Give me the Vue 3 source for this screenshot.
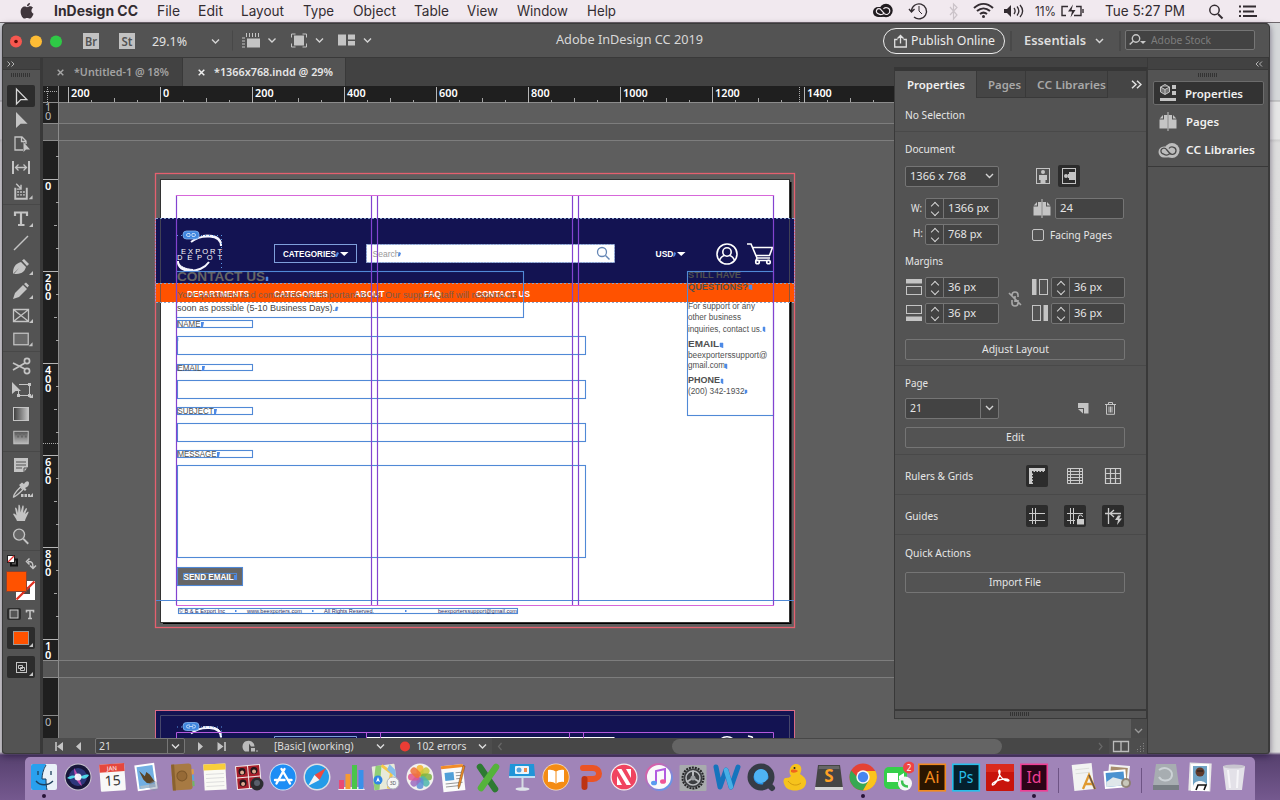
<script setup>
import { h } from 'vue'

const UI = '"Noto Sans", "Open Sans", sans-serif'

/* Single-line label fitted to a fixed advance width */
const Lbl = (p) =>
  h('svg', { width: p.w, height: 16, viewBox: `0 0 ${p.w} 16`, class: 'lbl', style: { display: 'block', overflow: 'visible', flex: 'none' } }, [
    h('text', {
      x: 0, y: 12, textLength: p.w, lengthAdjust: 'spacingAndGlyphs',
      'font-size': p.s || 11.5, 'font-weight': p.b || 400, fill: p.c || '#e6e6e6',
      'font-family': p.f || UI,
    }, p.t),
  ])
Lbl.props = ['t', 'w', 's', 'b', 'c', 'f']

const menus = [
  { t: 'InDesign CC', w: 84, slot: 103, b: 700 },
  { t: 'File', w: 23, slot: 41 }, { t: 'Edit', w: 25, slot: 43 },
  { t: 'Layout', w: 43, slot: 62 }, { t: 'Type', w: 31, slot: 50 },
  { t: 'Object', w: 43, slot: 61 }, { t: 'Table', w: 35, slot: 53 },
  { t: 'View', w: 31, slot: 50 }, { t: 'Window', w: 51, slot: 70 },
  { t: 'Help', w: 29, slot: 29 },
]

const C = '#c4c4c4'
const tri = (x, y) => `<path d="M${x} ${y}v-4l-4 4z" fill="${C}"/>`
/* Tool glyphs: y is the top of each cell, hh its height */
const tools = [
  { y: 84, hh: 25, p: `<rect x="7" y="85" width="28" height="22" rx="2" fill="#2c2c2c"/><path d="M16.500 89v15l4.300-4.400h6z" fill="none" stroke="#d8d8d8" stroke-width="1.300"/>` },
  { y: 109, hh: 23, p: `<path d="M16 112v16l4.600-4.200h7z" fill="${C}"/>` },
  { y: 132, hh: 24, p: `<path d="M23 150h-8v-13h7l4 4v3M21.500 137v4.500h4.500" fill="none" stroke="${C}" stroke-width="1.300"/><path d="M23.500 142v10l2.500-2.500h4z" fill="${C}"/>` },
  { y: 156, hh: 24, p: `<path d="M13 161v13M29 161v13" stroke="${C}" stroke-width="2"/><path d="M16 167.500h10M18.500 164.500l-3 3 3 3M23.500 164.500l3 3-3 3" fill="none" stroke="${C}" stroke-width="1.300"/>` },
  { y: 180, hh: 25, line: 1, p: `<path d="M15 188v11.500h12v-11.500" fill="none" stroke="${C}" stroke-width="2"/><path d="M17 192.500h8M17 195.500h8" stroke="${C}" stroke-width="1.500" stroke-dasharray="2 1"/><path d="M16 184l5 5M21 185v4.500h-4.500" stroke="${C}" stroke-width="1.500" fill="none"/>${tri(33, 200)}` },
  { y: 205, hh: 27, p: `<path d="M15 216v-3.500h12v3.500M21 212.500v12M18 225h6.500" stroke="${C}" stroke-width="2.200" fill="none"/>${tri(33, 227)}` },
  { y: 232, hh: 23, p: `<path d="M14 250l14-14" stroke="${C}" stroke-width="1.500"/>` },
  { y: 255, hh: 24, p: `<path d="M13 274c0-7 2-10 8-12l5 5c-2 6-5 7-12 7l5-6z" fill="${C}"/><path d="M22 260.500l2-1.500 5 5-2 2z" fill="${C}"/>${tri(33, 275)}` },
  { y: 279, hh: 24, p: `<path d="M13 299l2-6 8-8 4 4-8 8z" fill="${C}"/><path d="M24 284l2-1.500 3 3-1.500 2z" fill="${C}"/>${tri(33, 299)}` },
  { y: 303, hh: 24, p: `<path d="M13.500 309.500h15v12h-15zM14 310l14 11M28 310l-14 11" fill="none" stroke="${C}" stroke-width="1.300"/>${tri(33, 323)}` },
  { y: 327, hh: 25, line: 1, p: `<rect x="13.500" y="333.500" width="15" height="12" fill="#696969" stroke="${C}" stroke-width="1.300"/>${tri(33, 347)}` },
  { y: 352, hh: 26, p: `<g fill="none" stroke="${C}" stroke-width="1.700"><circle cx="27" cy="361" r="2.600"/><circle cx="27" cy="371" r="2.600"/><path d="M25 363l-12 7M25 369l-12-6"/></g>` },
  { y: 378, hh: 24, p: `<path d="M19 384.500h10.500v11H18.500v-5" fill="none" stroke="${C}"/><path d="M12 382v12l3.500-3h5.500z" fill="${C}"/><path d="M28 383h3v3h-3zM28 394h3v3h-3zM17 394h3v3h-3z" fill="${C}"/>${tri(33, 398)}` },
  { y: 402, hh: 24, p: `<rect x="13.500" y="407.500" width="15" height="13" fill="url(#tg1)" stroke="${C}"/>` },
  { y: 426, hh: 26, line: 1, p: `<rect x="13.500" y="431.500" width="15" height="13" fill="url(#tg2)" stroke="${C}"/><path d="M15 434h12M17 437h10" stroke="#666" stroke-width="2" stroke-dasharray="2 2"/>` },
  { y: 452, hh: 25, p: `<path d="M14 458h14v9l-4 5H14z" fill="${C}"/><path d="M16 462h10M16 465h10M16 468h6" stroke="#535353"/><path d="M24 472v-4h4" stroke="#535353" fill="none"/>` },
  { y: 477, hh: 24, p: `<path d="M13.500 497c0-3 7-10 7-10l2.500 2.500s-7 7-9.500 7.500z" fill="none" stroke="${C}" stroke-width="1.300"/><path d="M19 485l6 6 1.500-1.500-1.500-1.500c3-1 4-3 4-5s-3-3-5 1l-2-1.500z" fill="${C}"/><path d="M21 495.500h9" stroke="${C}" stroke-width="3" stroke-dasharray="2.500 1"/>${tri(33, 497)}` },
  { y: 501, hh: 24, p: `<path d="M17 521c-1-3-3-5-4-7 1-1.500 2.500 0 3.500 1.500L15 508c1-1.500 2 0 3 5l.5-8c1-1 2 0 2 7.500l2-7c1.500-.5 1.500 1 .500 7.500l3-5c1.500 0 1.200 1-1 6l3-2.500c2 0-2 5-3 9.500z" fill="${C}"/>` },
  { y: 525, hh: 26, line: 1, p: `<circle cx="19" cy="535" r="5.700" fill="#666" stroke="${C}" stroke-width="1.400"/><path d="M23.500 539.500l5 5" stroke="${C}" stroke-width="2"/>` },
  { y: 551, hh: 19, p: `<rect x="11" y="559.500" width="6" height="6" fill="#535353" stroke="#111" stroke-width="2"/><rect x="7.500" y="555.500" width="7" height="7" fill="#fff" stroke="#222"/><path d="M8 562l6-6" stroke="#e33" stroke-width="1.200"/><path d="M28 561.500c4 0 5 1 5 6M29.500 558.500l-3 3 3 3M30 565.500l3 3 3-3" stroke="${C}" stroke-width="1.500" fill="none"/>` },
  { y: 570, hh: 33, p: `<path d="M16 581h19v19H16z" fill="#fff"/><path d="M22 587h8v7h-8z" fill="#4a4a4a"/><path d="M16.500 599.500l18-18" stroke="#e03020" stroke-width="2.300"/><rect x="6.500" y="571.500" width="20" height="20" fill="#ff5200" stroke="#843"/>` },
  { y: 603, hh: 21, p: `<rect x="7" y="608" width="14" height="12" rx="2" fill="#2c2c2c"/><rect x="10" y="610" width="8" height="8" fill="#555" stroke="#ccc"/><path d="M26.500 612.500v-2h7v2M30 610v8M28 618.500h4" stroke="${C}" stroke-width="1.600" fill="none"/>` },
  { y: 624, hh: 28, p: `<rect x="7" y="627" width="28" height="22" rx="2" fill="#2c2c2c"/><rect x="13.500" y="631.500" width="15" height="13" fill="#ff5200" stroke="#999"/>${tri(33, 647)}` },
  { y: 652, hh: 28, p: `<rect x="7" y="656" width="28" height="22" rx="2" fill="#2c2c2c"/><rect x="16.500" y="662.500" width="10" height="10" fill="none" stroke="${C}"/><path d="M18.500 665.500h4v3h-4zM20.500 667.500h4v3h-4z" fill="none" stroke="${C}"/>${tri(33, 676)}` },
]

const hMajors = [200, 0, 200, 400, 600, 800, 1000, 1200, 1400].map((t, i) => ({ t, x: 68.5 + i * 92, w: String(t).length * 6.2 }))
const hMinors = Array.from({ length: 37 }, (_, i) => 68.5 + i * 23).filter((_, i) => i % 4)
const vMajors = ['0', '200', '400', '600', '800', '10'].map((t, i) => ({ t: t.split(''), y: 179.5 + i * 92 }))
const vMinors = Array.from({ length: 22 }, (_, i) => 156.5 + i * 23).filter((_, i) => (i - 1) % 4)

const cols = [176.5, 371.5, 377.5, 572.5, 578.5, 773.5]
const fields = [
  { t: 'NAME', w: 23, y: 320.5, by: 336.5, bh: 18 },
  { t: 'EMAIL', w: 24, y: 364.5, by: 380.5, bh: 18 },
  { t: 'SUBJECT', w: 36, y: 407.5, by: 423.5, bh: 18 },
  { t: 'MESSAGE', w: 39, y: 450.5, by: 465.5, bh: 92 },
]
const nav = [
  { t: 'DEPARTMENTS', x: 187, w: 62 }, { t: 'CATEGORIES', x: 274, w: 54 },
  { t: 'ABOUT', x: 354.5, w: 30 }, { t: 'FAQ', x: 424, w: 17 }, { t: 'CONTACT US', x: 476, w: 54 },
]
const side = [
  { t: 'STILL HAVE', y: 278, w: 53, b: 1 }, { t: 'QUESTIONS?', y: 289.5, w: 60, b: 1 },
  { t: 'For support or any', y: 309, w: 67 }, { t: 'other business', y: 320, w: 53 },
  { t: 'inquiries, contact us.', y: 332, w: 74 }, { t: 'EMAIL', y: 347, w: 31, b: 1 },
  { t: 'beexporterssupport@', y: 358, w: 79.5 }, { t: 'gmail.com', y: 368, w: 37 },
  { t: 'PHONE', y: 383, w: 32, b: 1 }, { t: '(200) 342-1932', y: 394, w: 56.5 },
]
const foot = [
  { t: '© B & E Export Inc', x: 179, w: 46 }, { t: 'www.beexporters.com', x: 247, w: 55 },
  { t: 'All Rights Reserved.', x: 324, w: 50 }, { t: 'beexporterssupport@gmail.com', x: 438, w: 79 },
]

const adobe = (t, c, bg) => `<rect x="2.800" y="3.300" width="26.500" height="26.500" fill="${bg}" stroke="${c}" stroke-width="1.600"/><text x="16" y="22" text-anchor="middle" font-size="16" font-family="Noto Sans" textLength="15" lengthAdjust="spacingAndGlyphs" fill="${c}">${t}</text>`
const petals = ['#f7b52c', '#c9c93a', '#7cb342', '#4db6ac', '#5c8fd6', '#9c6bc0', '#e0558f', '#f0713a']
  .map((c, i) => `<rect x="12.500" y="4" width="7" height="11.500" rx="3.500" fill="${c}" opacity=".85" transform="rotate(${i * 45} 16 16)"/>`).join('')
const dockA = [
  `<rect x="3" y="3" width="26" height="26" rx="2" fill="#e9f1f8"/><path d="M5 3h13c-3 5-4 10-4 15h4c0 4 .3 8 1 11H5a2 2 0 0 1-2-2V5a2 2 0 0 1 2-2z" fill="#29a0ee"/><path d="M10 10v4M23 10v4M8 20c4 5 12 5 17 0" fill="none" stroke="#1d3f5c" stroke-width="1.300"/><path d="M18 4c-3 5-4 10-4 14h4c0 4 .3 8 1 11" fill="none" stroke="#1d3f5c"/>`,
  `<circle cx="16" cy="16" r="13.500" fill="#c9c4d0"/><circle cx="16" cy="16" r="12.500" fill="#18163a"/><circle cx="16" cy="16" r="9" fill="#3d4fa8" opacity=".6"/><path d="M5 17c6-4 8-2 11-1s6-4 11-2c-3 6-8 3-11 2s-6 4-11 1z" fill="#4fd8e8"/><path d="M12 7c3 4 6 12 8 18-5-3-8-10-8-18z" fill="#e04fb8" opacity=".8"/><circle cx="16" cy="16" r="3.500" fill="#fff" opacity=".9"/>`,
  `<g transform="rotate(-4 16 16)"><rect x="4" y="3" width="25" height="27" rx="1" fill="#f8f8f8"/><path d="M4 3h25v8H4z" fill="#e5483e"/><text x="16.500" y="9.500" font-size="6" text-anchor="middle" fill="#fff" font-family="Noto Sans">JAN</text><text x="16.500" y="24.500" font-size="14" text-anchor="middle" fill="#333" font-family="Noto Sans">15</text></g>`,
  `<g transform="rotate(-8 16 16)"><rect x="6" y="3" width="20" height="26" fill="#fff"/><rect x="8" y="5" width="16" height="22" fill="#71afe3"/><path d="M10 9l5 6 2-4 3 3 4 8-4 1-4-1-3-4z" fill="#5a4528"/><path d="M9 24h15v3H9z" fill="#a6bdd0"/></g><circle cx="24" cy="25" r="5" fill="#8794aa" opacity=".45"/>`,
  `<g transform="rotate(-4 16 16)"><path d="M7 3h17a3 3 0 0 1 3 3v20a3 3 0 0 1-3 3H7z" fill="#a77a43"/><path d="M7 3h3v26H7z" fill="#8a622f"/><circle cx="17" cy="15" r="5" fill="#966a36" stroke="#7d572a"/><path d="M27 9h2v5h-2z" fill="#e0a040"/><path d="M27 15h2v5h-2z" fill="#5aa7d8"/><path d="M27 21h2v5h-2z" fill="#6fba62"/></g>`,
  `<g transform="rotate(-3 16 16)"><rect x="5" y="3" width="22" height="26" fill="#fafaf5"/><path d="M5 3h22v6H5z" fill="#f8ce3b"/><path d="M7 13h18M7 17h18M7 21h18M7 25h18" stroke="#ddd"/></g>`,
  `<g transform="rotate(-5 16 16)"><rect x="3" y="4" width="25" height="24" fill="#f4eeee"/><path d="M4 5h11v10.500H4zM16 5h11v10.500H16zM4 16.500h11V27H4zM16 16.500h11V27H16z" fill="#a81f2b"/><g fill="#24161a"><circle cx="9.500" cy="10" r="3.500"/><circle cx="21.500" cy="10" r="3.500"/><circle cx="9.500" cy="21.500" r="3.500"/></g><g fill="#dcab90"><circle cx="9.500" cy="11" r="2"/><circle cx="21.500" cy="11" r="2"/><circle cx="9.500" cy="22.500" r="2"/></g></g><circle cx="24" cy="23" r="6.500" fill="#2c2c30"/><circle cx="24" cy="22" r="3" fill="#59606c"/>`,
  `<circle cx="16" cy="16" r="13.500" fill="#d8e6f5"/><circle cx="16" cy="16" r="12.600" fill="#1d8df5"/><path d="M17.500 8L9.500 22.500M14.500 8l8.500 14.500M8 19h9.500M21 19h3.500" stroke="#fff" stroke-width="2.400" stroke-linecap="round"/>`,
  `<circle cx="16" cy="16" r="13.500" fill="#dcdfe4"/><circle cx="16" cy="16" r="12" fill="#249be8"/><path d="M25 7l-6.500 12-5-5z" fill="#f04a3c"/><path d="M7 25l6.500-11 5 5z" fill="#f3f3f3"/>`,
  `<path d="M3 29h27l-2-3H5z" fill="#eee"/><path d="M4 19h5v9H4z" fill="#e84a76"/><path d="M10.500 13h5v15h-5z" fill="#f59a32"/><path d="M17 4h5v24h-5z" fill="#4ac54a"/><path d="M23.500 9h5v19h-5z" fill="#3a90ea"/>`,
  `<g transform="rotate(-7 16 16)"><rect x="4" y="4" width="23" height="24" rx="1" fill="#e7ead9"/><path d="M8 4h6L9 28H4v-8z" fill="#8fce75"/><path d="M14 4l9 9-5 15" fill="none" stroke="#f6c84a" stroke-width="3"/><path d="M22 4l5 6v8l-8-9z" fill="#86bdec"/></g><circle cx="9" cy="19" r="4.500" fill="#2f86e4"/><path d="M9 16l2 5-2-1-2 1z" fill="#fff"/><circle cx="24" cy="22" r="6" fill="#f5f5f5" stroke="#b0b5bb"/><text x="24" y="24" font-size="5" text-anchor="middle" fill="#555" font-family="Noto Sans">3D</text>`,
  `<circle cx="16" cy="16" r="13.500" fill="#f2f1ee"/>${petals}`,
  `<g transform="rotate(-6 16 16)"><rect x="4" y="4" width="22" height="26" fill="#fafafa"/><path d="M4 4h22v3H4z" fill="#f28c28"/><rect x="7" y="11" width="9" height="8" fill="#4f9fd8"/><path d="M18 12h6M18 15h6M18 18h6M7 22h17M7 25h14" stroke="#999"/></g><path d="M27 5l-5 20-1.500 3-.5-3.500 5-20z" fill="#f08a24" stroke="#704a20" stroke-width=".5"/>`,
  `<path d="M8 6l15 22" stroke="#2d7a32" stroke-width="6.500" stroke-linecap="round"/><path d="M24 6L9 27" stroke="#55b33b" stroke-width="6.500" stroke-linecap="round"/>`,
  `<path d="M4 3h24l1 12H3z" fill="#2095d8"/><path d="M3 15h26v2H3z" fill="#bfe0f5"/><rect x="9" y="5" width="14" height="8" rx="1" fill="#eaf4fb"/><circle cx="13" cy="9" r="2.500" fill="#57a3dd"/><path d="M18 7h3v4h-3z" fill="#f18b4d"/><path d="M15.500 17h2v10h-2z" fill="#d5dbe2"/><ellipse cx="16.500" cy="28" rx="7" ry="1.700" fill="#dfe4ea"/>`,
  `<circle cx="16" cy="16" r="13.500" fill="#f4e3cf"/><circle cx="16" cy="16" r="12.800" fill="#f48c14"/><path d="M16 11c-2-2-5-2.500-8-2v12c3-.5 6 0 8 2 2-2 5-2.500 8-2V9c-3-.5-6 0-8 2z" fill="#fff"/><path d="M16 11v12" stroke="#f48c14"/>`,
  `<path d="M9 7h10c8 0 8 11 0 11h-5" fill="none" stroke="#ea5426" stroke-width="6" stroke-linecap="round"/><path d="M10.500 18v8" stroke="#bd3314" stroke-width="6" stroke-linecap="round"/>`,
  `<circle cx="16" cy="16" r="13.500" fill="#f5f0f2"/><circle cx="16" cy="16" r="12.300" fill="#f04460"/><path d="M9 8h4.500L23 24h-4.500zM9 15l5 9H9zM23 17l-5-9h5z" fill="#fff"/>`,
  `<circle cx="16" cy="16" r="13" fill="#fafafa" stroke="url(#mus)" stroke-width="2"/><path d="M13 22V10l9-2v12" fill="none" stroke="#b25be0" stroke-width="2"/><ellipse cx="11" cy="22" rx="3" ry="2.300" fill="#5a9cf0"/><ellipse cx="20" cy="20.500" rx="3" ry="2.300" fill="#ef5596"/>`,
  `<rect x="2.500" y="4" width="27" height="26" rx="1" fill="#a8abad"/><circle cx="16" cy="17" r="9.500" fill="#3b3d40"/><circle cx="16" cy="17" r="10.500" fill="none" stroke="#242526" stroke-width="2" stroke-dasharray="2 1"/><circle cx="16" cy="17" r="7" fill="none" stroke="#b8bbbe" stroke-width="1.500"/><path d="M16 17V9.500M16 17l-6.500 4M16 17l6.500 4" stroke="#b8bbbe" stroke-width="2"/><circle cx="16" cy="17" r="2.500" fill="#9a9da0"/>`,
  `<path d="M5 6l4 20 6-17 5 17 7-20" fill="none" stroke="#1674bd" stroke-width="5" stroke-linejoin="round" stroke-linecap="round"/><path d="M15 9l5 17" stroke="#48b0e6" stroke-width="4.500" stroke-linecap="round"/>`,
  `<circle cx="16" cy="16" r="10.500" fill="#2794e8" stroke="#363c46" stroke-width="6"/><path d="M19 19l8 8" stroke="#363c46" stroke-width="6" stroke-linecap="round"/><circle cx="16" cy="15" r="7" fill="#4fb4f4"/>`,
  `<path d="M6 17c4 0 5-1 6-2-3-4-1-11 4-12 6-1 8 5 5 10 5 3 8 7 5 12-3 6-17 6-20 0-2-4-2-6 0-8z" fill="#f6c31c"/><path d="M9 20c4 5 9 5 13 2" fill="none" stroke="#d39a0e"/><path d="M12 9c3-1 6 0 7 1-2 2-5 2-7 1z" fill="#f0641c"/><circle cx="15.500" cy="7" r="1" fill="#222"/>`,
  `<path d="M5 4h22l3 24H2z" fill="#454545"/><path d="M2 26h28v3H2z" fill="#d5d5d5"/><path d="M6 5h20l.5 3H5.500z" fill="#666"/><text x="16" y="21" font-size="17" font-weight="700" text-anchor="middle" font-family="Noto Sans" fill="#ffa126">S</text>`,
  `<circle cx="16" cy="16" r="13.500" fill="#e54234"/><path d="M4.200 9.500A13.500 13.500 0 0 0 16 29.500l6-10-6 3z" fill="#37a853"/><path d="M16 29.500A13.500 13.500 0 0 0 28.500 10H16l6 9z" fill="#fbc41c"/><circle cx="16" cy="16" r="6.700" fill="#f7f7f7"/><circle cx="16" cy="16" r="5.200" fill="#4585f0"/>`,
  `<rect x="2" y="6" width="23" height="22" rx="5" fill="#35cf4a"/><path d="M5 12h11v9H5zM17 15l5-3v9l-5-3z" fill="#fff"/><circle cx="23" cy="22.500" r="7" fill="#f4f7f5"/><path d="M20 19.500c0 4 2 6 6 6" stroke="#3bc250" stroke-width="2.500" fill="none"/><circle cx="27" cy="6.500" r="6" fill="#ee4444"/><text x="27" y="9.500" font-size="8" text-anchor="middle" fill="#fff" font-family="Noto Sans">2</text>`,
  adobe('Ai', '#f28a1e', '#2a1500'), adobe('Ps', '#27bfea', '#04202d'),
  `<rect x="2" y="3" width="28" height="27" rx="1" fill="#c8140c"/><path d="M2 3h28v8H2z" fill="#da2a1e"/><path d="M9 24c3-1 7-9 7-13 0-3-2-2-1 1 1 4 5 8 9 8 2 0 1-2-3-2-5 0-9 2-12 4-1 1-1 2 0 2z" fill="none" stroke="#fff" stroke-width="1.300"/>`,
  adobe('Id', '#f03f94', '#2c0418'),
]
const dockB = [
  `<g transform="rotate(-6 16 16)"><rect x="6" y="3" width="20" height="26" fill="#f2f3f2"/><path d="M9 8h14M9 12h14" stroke="#dde0dc"/></g><path d="M16 28l6-14 6 14M18 23h9" stroke="#e09a30" stroke-width="2.300" fill="none"/><path d="M22 14l6 14" stroke="#64564a" stroke-width="1.500"/>`,
  `<g transform="rotate(5 16 16)"><rect x="7" y="4" width="21" height="20" fill="#f2f2f2"/><rect x="9" y="6" width="17" height="15" fill="#a88d6c"/></g><g transform="rotate(-5 16 16)"><rect x="3" y="9" width="22" height="18" fill="#fff"/><rect x="5" y="11" width="18" height="14" fill="#4a92d0"/><path d="M5 20l7-4 11 4v5H5z" fill="#dfe7ea"/></g><circle cx="25" cy="22" r="5" fill="#8a7d6c" opacity=".9"/><circle cx="25" cy="22" r="3" fill="#c8c7ba"/>`,
]
const dockC = [
  `<path d="M6 3h20l3 22H3z" fill="#a7adb1"/><path d="M3 24h26v5H3z" fill="#777e83"/><path d="M9 9c7-5 16 1 12 8-3 4-10 3-12-1" fill="none" stroke="#ccd2d6" stroke-width="2"/>`,
  `<rect x="5" y="2" width="22" height="28" fill="#e8e8e8" transform="rotate(3 16 16)"/><rect x="7" y="3" width="18" height="27" fill="#fff"/><rect x="9" y="5" width="14" height="21" fill="#6fa3c4"/><circle cx="16" cy="11" r="4.500" fill="#5f3a2a"/><path d="M9 26c0-8 14-8 14 0z" fill="#fafafa"/><path d="M13 10h6" stroke="#1a1a1a"/><path d="M12 29l2-5h8l-2 5" stroke="#111" stroke-width="1.600" fill="none"/>`,
  `<path d="M5 5h22l-3 24H8z" fill="#e3e1e8"/><ellipse cx="16" cy="5.500" rx="11" ry="2" fill="#c8c4cf"/><path d="M10 9l2 18M20 9l-1 18" stroke="#f6f5f8" stroke-width="2"/>`,
]

const gRuler = `<rect x="1026" y="465" width="22" height="22" rx="2" fill="#2c2c2c"/><path d="M1029 468h16v4h-12v12h-4z" fill="#ccc"/><path d="M1032 471.500h13M1032.500 472v12" stroke="#2c2c2c" stroke-dasharray="1.500 1.500"/>`
const gBase = `<path d="M1067.500 468.500h15v15h-15zM1070.500 468v16M1079.500 468v16M1068 471.500h14M1068 474.500h14M1068 477.500h14M1068 480.500h14" fill="none" stroke="#ccc"/>`
const gGrid = `<path d="M1105.500 468.500h15v15h-15zM1110.500 468v16M1115.500 468v16M1105 473.500h16M1105 478.500h16" fill="none" stroke="#ccc" stroke-width="1.200"/>`
const box = (x) => `<rect x="${x}" y="505" width="22" height="22" rx="2" fill="#2c2c2c"/>`
const gA = box(1026) + `<path d="M1029 513.500h16M1029 520.500h16M1032.500 508v16M1035.500 508v16" stroke="#ccc"/>`
const gB = box(1064) + `<path d="M1067 513.500h16M1067 520.500h8M1070.500 508v16M1073.500 508v16" stroke="#ccc"/><rect x="1077" y="519" width="7" height="5.500" fill="#ccc"/><path d="M1078.500 519v-2a2 2 0 0 1 4 0" fill="none" stroke="#ccc"/>`
const gC = box(1102) + `<path d="M1105 513.500h16M1108.500 508v16M1114 510l-4 3.500 4 3.500" stroke="#ccc" fill="none" stroke-width="1.300"/><path d="M1118 515.500h3l-2 3h3l-5 6.500 1-5h-3z" fill="#ccc"/>`
const mTop = `<rect x="0" y="0" width="16" height="4.500" fill="#c4c4c4"/><rect x=".5" y="7.500" width="15" height="8" fill="none" stroke="#c4c4c4"/>`
const mBot = `<rect x=".5" y=".5" width="15" height="8" fill="none" stroke="#c4c4c4"/><rect x="0" y="11.500" width="16" height="4.500" fill="#c4c4c4"/>`
const mLeft = `<rect x="0" y="0" width="4.500" height="16" fill="#c4c4c4"/><rect x="7.500" y=".5" width="8" height="15" fill="none" stroke="#c4c4c4"/>`
const mRight = `<rect x=".5" y=".5" width="8" height="15" fill="none" stroke="#c4c4c4"/><rect x="11.500" y="0" width="4.500" height="16" fill="#c4c4c4"/>`
const pagesIcon = `<path d="M.5 7.500h4.500V3h3.500v13.500h-8zM9.500 3H13v4.500h4.500v9h-8z" fill="#c4c4c4"/><path d="M.7 6.500L4 3v3.500zM17.300 6.500L14 3v3.500z" fill="#c4c4c4"/><path d="M9 0v19" stroke="#c4c4c4"/>`
const ccIcon = `<rect x=".5" y="4.500" width="14" height="11" rx="5.500" fill="#bdbdbd"/><circle cx="14" cy="8.500" r="7.500" fill="#bdbdbd"/><path d="M12.500 11l-2 1.500c-1.500 1-3.500.5-5-.5a3 3 0 1 1 3-4.500l3 3.500c2 2.500 6.500 1.500 6.500-2.500S12.500 4 11 6.500" fill="none" stroke="#4a4a4a" stroke-width="1.300"/>`
</script>

<template>
  <div class="desk">
    <header class="menubar">
      <svg class="apple" width="16" height="18" viewBox="0 0 16 18"><path d="M8 5c1-.2 2-1 3.400-1 1.300 0 2.300.6 3 1.600-2.500 1.500-2.200 5.200.5 6.300C14 14.500 12.600 17 11 17c-1 0-1.500-.6-2.800-.6S6.400 17 5.400 17C3.500 17 1.300 13.300 1.300 9.800 1.300 6 3.700 4.300 5.500 4.300 6.700 4.300 7.500 5 8 5zM7.900 4c0-2 1.400-3.500 3.200-3.800C11.300 2.300 9.800 4 7.900 4z" fill="#40363c" /></svg>
      <div v-for="m in menus" :key="m.t" class="mi" :style="{ width: m.slot + 'px' }">
        <Lbl :t="m.t" :w="m.w" s="14" :b="m.b || 400" c="#332c31" f="Inter, sans-serif" />
      </div>
      <svg class="status" width="412" height="22" viewBox="868 0 412 22" fill="none" stroke="#332c31">
        <rect x="873" y="7" width="14" height="10" rx="5" fill="#211c20" stroke="none" /><circle cx="886" cy="10.500" r="6.700" fill="#211c20" stroke="none" />
        <path d="M884.500 13l-2 1.200c-1.500.6-3 .3-4-.4a2.600 2.600 0 1 1 2.600-4l3 3.500c2 2.200 5.700 1.200 5.700-2.300s-5-4.500-6.300-2" stroke="#f0e9ee" stroke-width="1.200" />
        <path d="M911.500 11a7.500 7.500 0 1 1 2.500 6M909 9l2.500 3 3-3" stroke-width="1.400" /><path d="M919 6v5l3 3" />
        <path d="M950 7l7 8-3.500 4V4l3.500 3.500-7 7.500" stroke="#cbc3c9" stroke-width="1.200" />
        <path d="M974 8c6-5.500 13-5.500 19 0M977 11c4-3.500 9-3.500 13 0M980 14c2.500-2 4.500-2 7 0" stroke-width="2" /><circle cx="983.500" cy="16.500" r="1.500" fill="#332c31" stroke="none" />
        <path d="M1004 9h3l4-4v12l-4-4h-3z" fill="#332c31" stroke="none" /><path d="M1014 8c1.500 2 1.500 4 0 6M1017 6.500c2.500 3 2.500 6 0 9M1020 5c3.500 4 3.500 8 0 12" stroke-width="1.300" />
        <path d="M1068 6.500h-6v9h4M1076 6.500h5v9h-7M1083 9v4" stroke-width="1.400" /><path d="M1073 4.500l-5 7h4l-1.500 6 5-7.500h-4z" fill="#332c31" stroke="none" />
        <g class="mt"><text x="1035" y="15.500" textLength="21" lengthAdjust="spacingAndGlyphs" font-size="12.500">11%</text><text x="1105" y="16" textLength="80" lengthAdjust="spacingAndGlyphs" font-size="14">Tue 5:27 PM</text></g>
        <circle cx="1214.500" cy="10" r="4.700" stroke-width="1.500" /><path d="M1218 14l4.500 4.500" stroke-width="2" />
        <path d="M1239 6.500h2M1239 11.500h2M1239 16h2M1243 6.500h13M1243 11.500h11M1243 16h14" stroke-width="1.800" />
      </svg>
    </header>

    <div class="window">
      <div class="titlebar">
        <svg width="381" height="34" viewBox="2 23.500 381 34">
          <circle cx="16" cy="41" r="6" fill="#f6574f" /><circle cx="16" cy="41" r="1.800" fill="#5c0d08" /><circle cx="36" cy="41" r="6" fill="#fdbc35" /><circle cx="56" cy="41" r="6" fill="#2fc946" />
          <path d="M83 32.500h16v16H83zM119 32.500h16v16h-16z" fill="#c2c2c2" />
          <g class="ui" font-size="12"><text x="85" y="45" fill="#535353" textLength="12" lengthAdjust="spacingAndGlyphs" font-weight="600">Br</text><text x="121.500" y="45" fill="#535353" textLength="11" lengthAdjust="spacingAndGlyphs" font-weight="600">St</text><text x="152" y="45.500" fill="#e2e2e2" textLength="35" lengthAdjust="spacingAndGlyphs">29.1%</text></g>
          <path d="M232.500 30v20" stroke="#484848" />
          <path d="M247 38h13v9h-13z" fill="#c4c4c4" /><path d="M246 34.500h14" stroke="#c4c4c4" stroke-width="4" stroke-dasharray="1 2" /><path d="M243.500 37v11" stroke="#c4c4c4" stroke-width="3" stroke-dasharray="1 2" />
          <path d="M294 35h10v10h-10z" fill="#c4c4c4" /><path d="M291.500 37v-3.500h4M302.500 33.500h4v3.500M306.500 43v3.500h-4M295.500 46.500h-4v-3.500" stroke="#c4c4c4" fill="none" />
          <path d="M338 34h8v11h-8zM348 34h7v5h-7zM348 40.500h7v4.500h-7z" fill="#c4c4c4" />
          <path d="M212 39l3.500 3.500 3.500-3.500M268.500 38l3.500 3.500 3.500-3.500M316 38l3.500 3.500 3.500-3.500M364 38l3.500 3.500 3.500-3.500" fill="none" stroke="#d4d4d4" stroke-width="1.400" />
        </svg>
        <div class="apptitle"><Lbl t="Adobe InDesign CC 2019" w="147" s="12.500" c="#d8d8d8" /></div>
        <div class="publish">
          <svg width="13" height="14" viewBox="0 0 13 14"><path d="M3.500 5.500H.7v7.500h11.600V5.500H9.500M6.500 9.500V2M3.500 4.500l3-3 3 3" fill="none" stroke="#e0e0e0" stroke-width="1.300" /></svg>
          <Lbl t="Publish Online" w="84" s="13" c="#ededed" />
        </div>
        <i class="tsep"></i>
        <Lbl t="Essentials" w="62" s="12.500" b="600" c="#dedede" />
        <svg class="chev" width="9" height="6" viewBox="0 0 9 6"><path d="M1 1l3.500 3.500L8 1" fill="none" stroke="#d4d4d4" stroke-width="1.500" /></svg>
        <i class="tsep t2"></i>
        <div class="stock">
          <svg width="17" height="12" viewBox="0 0 17 12"><circle cx="7" cy="4.500" r="3.700" fill="none" stroke="#c8c8c8" stroke-width="1.400" /><path d="M4.500 7L.7 10.500" stroke="#c8c8c8" stroke-width="1.600" /><path d="M11 7h6l-3 3z" fill="#c8c8c8" /></svg>
          <Lbl t="Adobe Stock" w="60" s="11" c="#7d7d7d" />
        </div>
      </div>

      <div class="work">
        <aside class="tools">
          <div class="thead"><svg width="8" height="6" viewBox="0 0 8 6"><path d="M.5.5L3 3 .5 5.500M4.500.5L7 3 4.500 5.500" fill="none" stroke="#b4b4b4" /></svg></div>
          <div class="grip"></div>
          <svg v-for="t in tools" :key="t.y" width="37" :height="t.hh" :viewBox="`3 ${t.y} 37 ${t.hh}`" :class="{ ruled: t.line }" v-html="t.p"></svg>
          <svg width="0" height="0"><defs><linearGradient id="tg1"><stop stop-color="#3c3c3c" /><stop offset="1" stop-color="#c8c8c8" /></linearGradient><linearGradient id="tg2" x2="0" y2="1"><stop stop-color="#555" /><stop offset="1" stop-color="#bbb" /></linearGradient><linearGradient id="mus" y2="1"><stop stop-color="#f0559b" /><stop offset="1" stop-color="#4fa0f5" /></linearGradient></defs></svg>
        </aside>

        <main class="doc">
          <div class="tabs">
            <div class="tab t1"><svg width="7" height="7" viewBox="0 0 7 7"><path d="M.7.7l5.600 5.600M6.300.7L.7 6.300" stroke="#a8a8a8" stroke-width="1.400" /></svg><Lbl t="*Untitled-1 @ 18%" w="95" b="600" c="#a2a2a2" /></div>
            <div class="tab on"><svg width="7" height="7" viewBox="0 0 7 7"><path d="M.7.7l5.600 5.600M6.300.7L.7 6.300" stroke="#eee" stroke-width="1.500" /></svg><Lbl t="*1366x768.indd @ 29%" w="119" b="600" c="#e6e6e6" /></div>
          </div>

          <svg class="canvas" width="1104" height="652" viewBox="43 86 1104 652">
            <rect x="43" y="86" width="1104" height="652" fill="#5e5e5e" />
            <path d="M58 124h1089v16H58zM58 661h1089v16H58z" fill="#575757" />
            <path d="M43 123.500h1104M43 140.500h1104M43 660.500h1104M43 677.500h1104" stroke="#7d7d7d" />

            <path d="M163 182h628.500v442H163z" fill="#000" />
            <rect x="160.500" y="179.500" width="629" height="443" fill="#fff" stroke="#333" />
            <rect x="155.500" y="173.500" width="639" height="454" fill="none" stroke="#e4606f" stroke-width="1.300" />
            <rect x="156" y="218" width="638" height="65" fill="#131352" />
            <rect x="156" y="283" width="638" height="19" fill="#ff5200" />
            <path d="M160.500 218v84M789.500 218v84" stroke="#555" stroke-opacity=".7" />
            <path d="M156 218.500h638M156 283.500h638M156 302.500h638" stroke="#8aa6cf" stroke-dasharray="2 2" />
            <path d="M155.500 218v84M794.500 218v84" stroke="#b58ac2" stroke-dasharray="2 1" />

            <g id="logo">
              <path d="M191 242c10-8 30-8 30 4M178 261c-1 13 23 13 31 1" fill="none" stroke="#f6f6ff" stroke-width="2" />
              <path d="M203 235.500c10-1 18 3 18 10 1.500-6-4-12-18-10zM178 262c0 5 8 10 15 7.500-8-.5-13-3-15-7.500z" fill="#f6f6ff" stroke="#f6f6ff" />
              <path d="M177 235.500h44M221.500 235v35" stroke="#5b9be8" stroke-dasharray="1 3" />
              <rect x="183" y="231" width="16" height="8" rx="3.500" fill="#3f86df" stroke="#86b7f2" stroke-width=".8" /><path d="M190 236.500h-2a1.500 1.500 0 0 1 0-3h2M192 233.500h2a1.500 1.500 0 0 1 0 3h-2M189 235h4" fill="none" stroke="#d6e6fb" stroke-width=".8" />
            </g>
            <g class="ff" fill="#fff">
              <text x="181" y="253.500" font-size="7.500" textLength="41">EXPORT</text><text x="177" y="260" font-size="7.500" textLength="45">DEPOT</text>
              <g font-weight="700" font-size="8.800">
                <text x="283" y="256.500" textLength="53" lengthAdjust="spacingAndGlyphs">CATEGORIES</text>
                <text x="655.500" y="256.500" textLength="18" lengthAdjust="spacingAndGlyphs">USD</text>
                <text v-for="n in nav" :key="n.t" :x="n.x" y="296.500" :textLength="n.w" lengthAdjust="spacingAndGlyphs">{{ n.t }}</text>
              </g>
            </g>
            <path d="M340 252h8.500l-4.250 4zM677 252h8.500l-4.250 4z" fill="#fff" />
            <rect x="274.500" y="244.500" width="82" height="18" fill="none" stroke="#7f9fdb" />
            <rect x="366.500" y="244.500" width="248" height="18" fill="#fff" stroke="#9bb8e6" stroke-dasharray="2 1" />
            <text class="ff" x="372.500" y="256.500" font-size="9" fill="#999" textLength="27" lengthAdjust="spacingAndGlyphs">Search</text>
            <path d="M335 257l2-5 2 1-2 4zM398 256l1-4 2 1-1 3zM673 257l1-5 2 1-1 3z" fill="#4e8ae6" />
            <g fill="none" stroke="#6486b5"><circle cx="602" cy="252" r="4.500" stroke-width="1.300" /><path d="M605.500 255.500l4 4" stroke-width="1.500" /></g>
            <g fill="none" stroke="#fff" stroke-width="1.600"><circle cx="727" cy="254" r="10" /><circle cx="727" cy="252" r="4.200" /><path d="M719.500 260.500c1-3 3-4.500 5-5M734.500 260.500c-1-3-3-4.500-5-5" /><path d="M747 244h4l6 14h13M752.500 247.500h20l-3 8h-14M757 258l-1 2.500h14" /><circle cx="757.500" cy="262" r="1.800" /><circle cx="768.500" cy="262" r="1.800" /></g>

            <g class="ff" fill="#666">
              <text x="177" y="281" font-size="13.500" font-weight="700" textLength="88" lengthAdjust="spacingAndGlyphs">CONTACT US</text>
              <text x="177" y="298" font-size="9.500" textLength="340" lengthAdjust="spacingAndGlyphs" fill="#6b5e58" opacity=".88">Your questions and comments are important to us. Our support staff will respond as</text>
              <text x="177" y="311" font-size="9.500" textLength="158" lengthAdjust="spacingAndGlyphs" fill="#444">soon as possible (5-10 Business Days).</text>
              <text v-for="s in side" :key="s.t" x="688" :y="s.y" :font-size="s.b ? 9.500 : 8.500" :font-weight="s.b ? 700 : 400" :textLength="s.w" lengthAdjust="spacingAndGlyphs" fill="#505050">{{ s.t }}</text>
            </g>
            <path d="M266 281v-4h2v4M335 311l1-4h2l-1 4M749 289v-4h3v5M763 331v-4h2v5M720 347v-4h3v5M725 368v-4h2v5M721 383v-4h2v5M745 394v-4h2v3M178 341v-3" fill="#4e8ae6" stroke="#4e8ae6" stroke-width=".5" />
            <g fill="none" stroke="#5089d6" stroke-width="1.100">
              <rect x="176.500" y="271.500" width="347" height="46" /><rect x="687.500" y="271.500" width="86" height="144" />
              <g v-for="f in fields" :key="f.t"><rect x="177.500" :y="f.y" width="75" :height="f.t === 'EMAIL' ? 6 : 7" /><rect x="177.500" :y="f.by" width="408" :height="f.bh" /></g>
              <path d="M156 600.500h638" /><rect x="178.500" y="608.500" width="339" height="5" />
              <rect x="177.500" y="567.500" width="65" height="18" fill="#666" /><rect x="183.500" y="573.500" width="53" height="6" />
            </g>
            <g class="ff">
              <template v-for="f in fields" :key="f.t"><text x="177.500" :y="f.y + 6.800" font-size="8.500" :textLength="f.w" lengthAdjust="spacingAndGlyphs" fill="#505050">{{ f.t }}</text><path :d="`M${178 + f.w} ${f.y + 6.500}v-5h3l-1 5z`" fill="#4e8ae6" /></template>
              <text x="183.500" y="580" font-size="8.500" font-weight="700" fill="#fff" textLength="50" lengthAdjust="spacingAndGlyphs">SEND EMAIL</text>
              <text v-for="f in foot" :key="f.t" :x="f.x" y="613" font-size="6" :textLength="f.w" lengthAdjust="spacingAndGlyphs" fill="#1c2b62">{{ f.t }}</text>
            </g>
            <path d="M234 579v-4h3v5M235 612v-2h1.500v2M312 612v-2h1.500v2M405 612v-2h1.500v2" fill="#4e8ae6" />
            <path v-for="x in cols" :key="x" :d="`M${x} 195v410`" stroke="#8343d0" stroke-width="1.200" />
            <path d="M176 195.500h598M176 605.500h598" stroke="#d767da" stroke-width="1.200" />

            <rect x="155.500" y="710.500" width="639" height="40" fill="#131352" stroke="#d96a86" />
            <path d="M160.500 740v-24.500h629V740" fill="none" stroke="#47476b" />
            <use href="#logo" y="491.500" />
            <path d="M274.500 740v-3.500h82v4" stroke="#7f9fdb" fill="none" /><path d="M366 737h248.500v1H366z" fill="#fff" />
            <path d="M721 739c3-3 9-3 12 0M748 736l4 1 1 2" stroke="#fff" stroke-width="1.500" fill="none" />
            <path d="M176.500 738v-5.500h597v6M366.500 733v5M380.500 733v5M569.500 733v5M583.500 733v5" fill="none" stroke="#b458dd" />

            <rect x="1131" y="700" width="16" height="38" fill="#4b4b4b" /><path d="M1135 729l3.500 3.500 3.500-3.500" fill="none" stroke="#999" stroke-width="1.300" />

            <path d="M43 86h1104v16H43z" fill="#1f1f1f" /><path d="M43 102h15v636H43z" fill="#1f1f1f" /><path d="M43 124h15v16H43zM43 661h15v16H43z" fill="#575757" />
            <path d="M43 102.500h1104M58.500 86v652" stroke="#8c8c8c" /><path d="M43 123.500h16M43 140.500h16M43 660.500h16M43 677.500h16" stroke="#8c8c8c" />
            <path d="M44 91.500h14M47.500 87v15M43 443.500h15M799.500 87v15" stroke="#aaa" stroke-dasharray="1 1" />
            <g class="ui" fill="#fff" font-size="11" font-weight="600">
              <template v-for="m in hMajors" :key="m.x"><path :d="`M${m.x} 87v16`" stroke="#b5b5b5" /><text :x="m.x + 2.500" y="97" :textLength="m.w" lengthAdjust="spacingAndGlyphs">{{ m.t }}</text></template>
              <path v-for="(x, i) in hMinors" :key="x" :d="`M${x} ${i % 3 === 1 ? 98 : 100}V102`" stroke="#a5a5a5" />
              <template v-for="m in vMajors" :key="m.y"><path :d="`M43 ${m.y}h15`" stroke="#b5b5b5" /><text v-for="(d, i) in m.t" :key="i" x="45" :y="m.y + 10.500 + i * 9">{{ d }}</text></template>
              <path v-for="(y, i) in vMinors" :key="y" :d="`M${(i + 2) % 3 === 1 ? 54 : 56} ${y}h3`" stroke="#a5a5a5" />
              <g fill="#bbb" font-weight="400"><text x="45" y="111">1</text><text x="45" y="120">0</text><text x="45" y="726">0</text></g><path d="M43 715.500h15" stroke="#888" />
            </g>
          </svg>

          <svg width="1104" height="16" viewBox="43 738 1104 16">
            <path d="M43 738h1104v16H43z" fill="#4d4d4d" />
            <path d="M56 742v9M225 742v9" stroke="#c4c4c4" stroke-width="1.600" /><path d="M63 742v9l-6-4.500zM81 742v9l-5-4.500zM198 742v9l5-4.500zM217.500 742v9l6-4.500z" fill="#c4c4c4" />
            <rect x="95.500" y="738.500" width="89" height="15" rx="1.500" fill="#434343" stroke="#777" /><path d="M167.500 739v14" stroke="#777" />
            <path d="M172 744.500l3.500 3.500 3.500-3.500M377 744.500l3.500 3.500 3.500-3.500M479 744.500l3.500 3.500 3.500-3.500" fill="none" stroke="#ddd" stroke-width="1.400" /><path d="M501.500 743l-3 3.500 3 3.500M1099 743l3 3.500-3 3.500" fill="none" stroke="#8f8f8f" stroke-width="1.200" />
            <path d="M245 751.500a6 6 0 1 1 9.500-5h-3.500l-2-3v8zM251 748h4v3.500h-4z" fill="#bbb" /><path d="M256 751h2" stroke="#bbb" />
            <circle cx="405" cy="746.500" r="5" fill="#ea3d35" />
            <g class="ui" font-size="11.500" fill="#dedede"><text x="99" y="750" textLength="12" lengthAdjust="spacingAndGlyphs">21</text><text x="274" y="750" textLength="79.500" lengthAdjust="spacingAndGlyphs">[Basic] (working)</text><text x="416.500" y="750" textLength="50" lengthAdjust="spacingAndGlyphs">102 errors</text></g>
            <path d="M492 738h617v16H492z" fill="#414141" opacity=".5" /><rect x="672" y="739" width="330" height="15" rx="7.500" fill="#646464" />
            <path d="M1113.500 741.500h15v10h-15zM1121 742v10" fill="none" stroke="#bbb" stroke-width="1.300" />
            <path d="M1143.500 743v9M1140.500 746v6M1137.500 749v3" stroke="#888" stroke-dasharray="1 1.500" />
          </svg>

          <section class="panel">
            <div class="ptabs">
              <div class="pt on"><Lbl t="Properties" w="58" b="600" c="#f0f0f0" /></div>
              <div class="pt p2"><Lbl t="Pages" w="33" b="600" c="#a8a8a8" /></div>
              <div class="pt p3"><Lbl t="CC Libraries" w="69" b="600" c="#a8a8a8" /></div>
              <svg class="more" width="11" height="9" viewBox="0 0 11 9"><path d="M1 .7l4 3.800-4 3.800M6 .7l4 3.800-4 3.800" fill="none" stroke="#e0e0e0" stroke-width="1.500" /></svg>
            </div>
            <div class="row nosel"><Lbl t="No Selection" w="60" /></div>
            <div class="row dlabel"><Lbl t="Document" w="50" /></div>
            <div class="row r24">
              <div class="sel"><Lbl t="1366 x 768" w="56" /><svg width="9" height="6" viewBox="0 0 9 6"><path d="M1 1l3.500 3.500L8 1" fill="none" stroke="#d4d4d4" stroke-width="1.400" /></svg></div>
              <svg class="portrait" width="14" height="16" viewBox="0 0 14 16"><rect x=".5" y=".5" width="13" height="15" fill="none" stroke="#c4c4c4" /><circle cx="7" cy="4" r="2" fill="#c4c4c4" /><path d="M3 7h8v5H9.500v3h-5v-3H3z" fill="#c4c4c4" /></svg>
              <svg class="landscape" width="22" height="22" viewBox="0 0 22 22"><rect width="22" height="22" rx="2" fill="#2c2c2c" /><rect x="4.500" y="3.500" width="13" height="15" fill="none" stroke="#c4c4c4" /><circle cx="8" cy="11" r="2" fill="#c4c4c4" /><path d="M17 7h-6v2h-1v4h1v2h6z" fill="#c4c4c4" /></svg>
            </div>
            <div class="row r26 wrow">
              <div class="wl"><Lbl t="W:" w="11" /></div><div class="num"><b></b><Lbl t="1366 px" w="41" /></div>
              <svg class="pgi" width="18" height="19" viewBox="0 0 18 19" v-html="pagesIcon"></svg><div class="plain"><Lbl t="24" w="13" /></div>
            </div>
            <div class="row r26">
              <div class="wl h"><Lbl t="H:" w="10" /></div><div class="num"><b></b><Lbl t="768 px" w="34" /></div>
              <i class="check"></i><Lbl class="fp" t="Facing Pages" w="62" />
            </div>
            <div class="row mlabel"><Lbl t="Margins" w="38" /></div>
            <div class="mrows">
              <div class="row r26"><svg class="ma" width="16" height="16" v-html="mTop"></svg><div class="num"><b></b><Lbl t="36 px" w="28" /></div><svg class="mb" width="16" height="16" v-html="mLeft"></svg><div class="num"><b></b><Lbl t="36 px" w="28" /></div></div>
              <div class="row r26"><svg class="ma" width="16" height="16" v-html="mBot"></svg><div class="num"><b></b><Lbl t="36 px" w="28" /></div><svg class="mb" width="16" height="16" v-html="mRight"></svg><div class="num"><b></b><Lbl t="36 px" w="28" /></div></div>
              <svg class="unlink" width="14" height="16" viewBox="0 0 14 16"><path d="M4 6V4a3 3 0 0 1 6 0v2M4 9v3a3 3 0 0 0 6 0V9M7 5v6M1 2l12 12" fill="none" stroke="#a8a8a8" stroke-width="1.600" /></svg>
            </div>
            <div class="btn adj"><Lbl t="Adjust Layout" w="67" /></div>
            <div class="row page"><Lbl t="Page" w="23" /></div>
            <div class="row r26">
              <div class="sel split"><Lbl t="21" w="12" /><svg width="9" height="6" viewBox="0 0 9 6"><path d="M1 1l3.500 3.500L8 1" fill="none" stroke="#d4d4d4" stroke-width="1.400" /></svg></div>
              <svg class="newp" width="11" height="11" viewBox="0 0 11 11"><path d="M0 0h10.500v10.500H6V5H0z" fill="#c4c4c4" /><path d="M0 6h5v4.500z" fill="#c4c4c4" /></svg>
              <svg class="trash" width="11" height="13" viewBox="0 0 11 13"><path d="M0 2.500h11M3.500 2V.5h4V2M1.500 3v9.300h8V3M4 4.500v6M5.500 4.500v6M7 4.500v6" fill="none" stroke="#c4c4c4" /></svg>
            </div>
            <div class="btn edit"><Lbl t="Edit" w="18.500" /></div>
            <div class="row tg rg"><Lbl t="Rulers &amp; Grids" w="68" /><svg width="100" height="26" viewBox="1026 463 100 26" v-html="gRuler + gBase + gGrid"></svg></div>
            <div class="row tg gd"><Lbl t="Guides" w="33" /><svg width="100" height="26" viewBox="1026 503 100 26" v-html="gA + gB + gC"></svg></div>
            <div class="row qa"><Lbl t="Quick Actions" w="66" /></div>
            <div class="btn imp"><Lbl t="Import File" w="52" /></div>
            <div class="pfoot"><div class="grip"></div></div>
          </section>
        </main>

        <aside class="side">
          <div class="shead"><svg width="8" height="6" viewBox="0 0 8 6"><path d="M3.500.5L1 3l2.500 2.500M7 .5L4.500 3 7 5.500" fill="none" stroke="#b4b4b4" /></svg></div>
          <div class="grip g3"></div>
          <div class="sb on"><svg width="20" height="20" viewBox="0 0 20 20"><path d="M1.500 4L6 1.500 10.500 4v5L6 11.500 1.500 9zM1.500 4L6 6.500 10.500 4M6 6.500v5" fill="#777" stroke="#c4c4c4" /><path d="M13 2h4v4h-4zM13 8h4v4h-4zM1 15h16v3H1z" fill="#c4c4c4" /></svg><Lbl t="Properties" w="58" b="600" c="#f0f0f0" /></div>
          <div class="sb"><svg width="20" height="20" viewBox="-1 0 20 20" v-html="pagesIcon"></svg><Lbl t="Pages" w="33" b="600" c="#f0f0f0" /></div>
          <div class="sb cc"><svg width="22" height="17" viewBox="0 0 22 17" v-html="ccIcon"></svg><Lbl t="CC Libraries" w="69" b="600" c="#f0f0f0" /></div>
          <div class="sline"></div>
        </aside>
      </div>
    </div>

    <footer class="dock">
      <div v-for="(d, i) in dockA" :key="i" class="di"><svg width="32" height="32" viewBox="0 0 32 32" v-html="d"></svg><i v-if="[0, 24, 29].includes(i)"></i></div>
      <div class="ds"></div>
      <div v-for="(d, i) in dockB" :key="'b' + i" class="di"><svg width="32" height="32" viewBox="0 0 32 32" v-html="d"></svg></div>
      <div class="ds"></div>
      <div v-for="(d, i) in dockC" :key="'c' + i" class="di"><svg width="32" height="32" viewBox="0 0 32 32" v-html="d"></svg></div>
    </footer>
  </div>
</template>

<style>
html, body { margin: 0; overflow: hidden; }
</style>
<style scoped>
* { box-sizing: border-box; }
.desk { width: 1280px; height: 800px; overflow: hidden; display: flex; flex-direction: column; font-family: "Noto Sans", sans-serif; background: linear-gradient(#d6d8da 0, #d6d8da 100px, #aaa 101px, #e6e6e6 102px, #e6e6e6 139px, #cfcfcf 140px, #dedede 143px, #dcdcdc 752px, #56406e 755px, #75598f 800px); }
svg { display: block; flex: none; }
.ui text, text.ui, .ui { font-family: "Noto Sans", sans-serif; }
.ff { font-family: "Liberation Sans", Arial, sans-serif; }
.menubar { height: 23px; flex: none; display: flex; align-items: center; background: #f1e9ef; border-bottom: 1px solid #6d666b; }
.apple { margin: -1px 19px 0 19px; transform: scale(.95); }
.mi { flex: none; padding-top: 2px; }
.status { margin-left: auto; }
.mt { font-family: Inter, sans-serif; fill: #332c31; stroke: none; }
.window { height: 731px; width: 1268px; margin-left: 2px; flex: none; background: #535353; border-radius: 5px 5px 4px 4px; overflow: hidden; box-shadow: 0 0 0 1px #3a3a3a inset, 0 2px 6px rgba(20, 5, 40, .5); }
.titlebar { height: 34px; display: flex; align-items: center; border-top: 1px solid #3a3a3a; }
.apptitle { margin: -2px 0 0 173px; }
.publish { margin-left: 180px; width: 122px; height: 26px; border: 1.5px solid #ececec; border-radius: 13px; display: flex; align-items: center; gap: 4px; padding-left: 10px; flex: none; }
.tsep { width: 2px; height: 20px; background: #494949; margin: 0 12px 0 5px; flex: none; }
.tsep.t2 { margin: 0 4px 0 15px; }
.chev { margin-left: 9px; }
.stock { width: 130px; height: 20px; margin-top: -2px; border: 1px solid #757575; border-radius: 2px; background: #434343; display: flex; align-items: center; gap: 5px; padding-left: 3px; flex: none; }
.work { display: flex; height: 697px; }
.tools { width: 41px; flex: none; border-right: 3px solid #393939; border-left: 1px solid #3a3a3a; border-top: 1px solid #393939; }
.thead { height: 12px; background: #424242; border-bottom: 1px solid #393939; padding: 3px 0 0 4px; }
.grip { width: 20px; height: 4px; margin: 3px 0 7px 8px; background: repeating-linear-gradient(90deg, #333 0 1px, #535353 1px 2px); }
.ruled { border-bottom: 1px solid #484848; }
.doc { width: 1104px; flex: none; position: relative; border-top: 1px solid #393939; }
.tabs { height: 28px; background: #424242; display: flex; }
.tab { display: flex; align-items: center; padding-left: 14px; gap: 10px; height: 28px; }
.t1 { width: 140px; border-right: 1px solid #393939; }
.tab.on { width: 163px; gap: 9px; padding-left: 15px; background: #535353; border-right: 1px solid #393939; }
.panel { position: absolute; left: 851px; top: 9px; width: 254px; height: 652px; background: #535353; border: 1px solid #393939; border-top: 4px solid #363636; border-right-width: 2px; }
.ptabs { height: 27px; display: flex; background: #454545; }
.pt { height: 27px; display: flex; align-items: center; border-right: 1px solid #393939; border-bottom: 1px solid #393939; }
.pt.on { width: 82px; padding-left: 12px; background: #535353; border-bottom: 0; }
.p2 { width: 49px; padding: 2px 0 0 11px; }
.p3 { width: 82px; padding: 2px 0 0 11px; }
.ptabs .more { margin: 9px 0 0 23px; }
.row { display: flex; align-items: center; padding-left: 10px; }
.nosel { height: 34px; border-bottom: 1px solid #494949; }
.dlabel { height: 33px; }
.r24 { height: 24px; margin-top: -1px; }
.r26 { height: 26px; }
.wrow { margin-top: 7px; }
.sel { width: 94px; height: 21px; border: 1px solid #757575; border-radius: 2px; background: #434343; display: flex; align-items: center; justify-content: space-between; padding: 0 4px 0 4px; }
.split { background: linear-gradient(90deg, #434343 74px, #757575 74px, #757575 75px, #434343 75px); }
.portrait { margin-left: 37px; }
.landscape { margin-left: 8px; }
.wl { width: 20px; padding-left: 6px; }
.wl.h { padding-left: 8px; margin-top: -3px; }
.num { width: 74px; height: 21px; border: 1px solid #757575; border-radius: 2px; background: #434343; display: flex; align-items: center; gap: 4px; flex: none; }
.num b { width: 18px; height: 19px; border-right: 1px solid #757575; position: relative; }
.num b::before, .num b::after { content: ""; position: absolute; left: 6px; width: 5px; height: 5px; border: solid #d4d4d4; border-width: 1.200px 0 0 1.200px; transform: rotate(45deg); top: 4px; }
.num b::after { top: 10px; transform: rotate(225deg); }
.pgi { margin-left: 34px; }
.plain { width: 69px; height: 21px; margin-left: 4px; border: 1px solid #757575; border-radius: 2px; background: #434343; padding: 1px 0 0 4px; }
.check { width: 12px; height: 12px; border: 1px solid #c4c4c4; border-radius: 2px; margin: 2px 6px 0 33px; }
.fp { margin-top: 2px; }
.mlabel { height: 27px; }
.mrows { position: relative; }
.ma { margin: 0 3px 0 1px; }
.mb { margin: 0 3px 0 33px; }
.unlink { position: absolute; left: 113px; top: 17px; }
.btn { width: 220px; height: 21px; margin-left: 10px; border: 1px solid #757575; border-radius: 2px; display: flex; align-items: center; justify-content: center; }
.btn .lbl { margin-top: -2px; }
.adj { margin-top: 13px; }
.page { margin-top: 5px; border-top: 1px solid #494949; height: 30px; padding-top: 5px; }
.newp { margin-left: 79px; }
.trash { margin-left: 16px; }
.edit { margin-top: 6px; }
.tg { height: 40px; border-top: 1px solid #494949; padding: 2px 20px 0 10px; justify-content: space-between; }
.rg { margin-top: 6px; }
.gd { border-bottom: 1px solid #494949; height: 41px; padding-top: 3px; }
.qa { height: 35px; }
.imp { margin-top: 2px; }
.pfoot { position: absolute; left: 0; right: 0; bottom: 0; height: 9px; border-top: 2px solid #393939; }
.pfoot .grip { margin: 1px 0 0 115px; }
.side { width: 122px; flex: none; border-left: 1px solid #393939; border-top: 1px solid #393939; border-right: 1px solid #3a3a3a; }
.shead { height: 12px; background: #424242; border-bottom: 1px solid #393939; display: flex; justify-content: flex-end; padding: 3px 5px 0 0; }
.g3 { margin: 3px 0 4px 50px; }
.sb { height: 28px; display: flex; align-items: center; padding-left: 10px; gap: 8px; }
.sb.on { height: 24px; margin: 0 4px 3px 5px; padding-left: 5px; gap: 6px; background: #333; border: 1px solid #6c6c6c; border-radius: 2px; }
.sb.on .lbl { margin-top: 2px; }
.sb.cc { gap: 6px; }
.sline { border-top: 1px solid #393939; margin-top: 2px; }
.dock { margin: 3px 0 0 25px; width: 1230px; height: 43px; flex: none; border-radius: 5px 5px 0 0; background: #a084b8; display: flex; padding-left: 2px; }
.di { width: 34.150px; flex: none; display: flex; flex-direction: column; align-items: center; padding-top: 4px; }
.di i { width: 4px; height: 4px; border-radius: 2px; background: #271338; margin-top: 1px; }
.ds { width: 14.700px; flex: none; margin: 11px 0 7px; background: linear-gradient(#6e5485, #6e5485) 7px 0 / 1px 100% no-repeat; }
</style>
